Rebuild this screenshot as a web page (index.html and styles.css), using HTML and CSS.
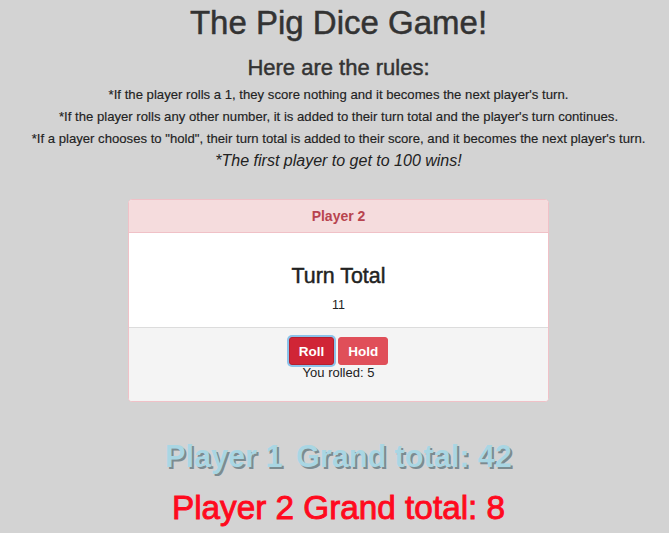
FILE: index.html
```html
<!DOCTYPE html>
<html>
<head>
<meta charset="utf-8">
<title>The Pig Dice Game!</title>
<link rel="stylesheet" href="styles.css">
</head>
<body>
<main class="page">
  <h1 class="title">The Pig Dice Game!</h1>
  <h3 class="rules-title">Here are the rules:</h3>
  <p class="rule">*If the player rolls a 1, they score nothing and it becomes the next player's turn.</p>
  <p class="rule">*If the player rolls any other number, it is added to their turn total and the player's turn continues.</p>
  <p class="rule">*If a player chooses to "hold", their turn total is added to their score, and it becomes the next player's turn.</p>
  <p class="rule-win">*The first player to get to 100 wins!</p>

  <section class="card">
    <header class="card-header">Player 2</header>
    <div class="card-body">
      <h4 class="turn-title">Turn Total</h4>
      <p class="turn-value">11</p>
    </div>
    <footer class="card-footer">
      <div class="buttons">
        <button class="btn btn-roll">Roll</button>
        <button class="btn btn-hold">Hold</button>
      </div>
      <p class="rolled">You rolled: 5</p>
    </footer>
  </section>

  <h2 class="total total-p1"><span>Player 1</span> <span class="gap">Grand total: 42</span></h2>
  <h2 class="total total-p2">Player 2 Grand total: 8</h2>
</main>
</body>
</html>
```
FILE: styles.css
```css
html, body {
  margin: 0;
  padding: 0;
}
body {
  background: #d3d3d3;
  font-family: "Liberation Sans", Arial, Helvetica, sans-serif;
  color: #333;
  padding-left: 8px;
}
.page {
  text-align: center;
}
.title {
  margin: 0;
  padding-top: 3px;
  font-size: 33px;
  line-height: 40px;
  font-weight: normal;
  color: #333;
  -webkit-text-stroke: 0.5px #333;
}
.rules-title {
  margin: 12px 0 3px;
  font-size: 22px;
  line-height: 26px;
  font-weight: normal;
  color: #333;
  -webkit-text-stroke: 0.45px #333;
}
.rule {
  margin: 0;
  font-size: 13.15px;
  line-height: 22px;
  color: #222;
  -webkit-text-stroke: 0.15px #222;
}
.rule-win {
  margin: 0;
  font-size: 16px;
  line-height: 22px;
  font-style: italic;
  color: #222;
}
.card {
  width: 419px;
  margin: 27px 0 0 120px;
  border: 1px solid #f0c1c7;
  border-radius: 4px;
  background: #fff;
  overflow: hidden;
  text-align: center;
}
.card-header {
  height: 32px;
  line-height: 32px;
  background: #f5dcdd;
  border-bottom: 1px solid #f0c1c7;
  color: #b8444f;
  font-weight: bold;
  font-size: 14px;
}
.card-body {
  padding: 31px 0 13px;
  background: #fff;
  border-bottom: 1px solid #dcdcdc;
}
.turn-title {
  margin: 0 0 8px;
  font-size: 21.4px;
  line-height: 24px;
  font-weight: normal;
  color: #222;
  -webkit-text-stroke: 0.45px #222;
}
.turn-value {
  margin: 0;
  font-size: 12.5px;
  line-height: 18px;
  color: #222;
}
.card-footer {
  background: #f4f4f4;
  padding: 9px 0 20px;
}
.buttons {
  display: flex;
  justify-content: center;
  gap: 4px;
}
.btn {
  height: 28px;
  padding: 0 9px;
  border-radius: 3px;
  font-family: "Liberation Sans", Arial, sans-serif;
  font-size: 13.5px;
  font-weight: bold;
  color: #fff;
  cursor: pointer;
}
.btn-roll {
  background: #d02536;
  border: 1px solid #b51f2e;
  box-shadow: 0 0 0 2px #8cc3ea;
}
.btn-hold {
  background: #e04f59;
  border: 1px solid #e04f59;
}
.rolled {
  margin: 0;
  font-size: 13px;
  line-height: 16px;
  color: #222;
}
.total {
  margin: 0;
}
.total-p1 {
  margin-top: 36px;
  font-size: 30.6px;
  line-height: 36px;
  font-weight: bold;
  color: #a9d6e3;
  text-shadow: 2px 2px 0 #7c8b90;
}
.total-p1 .gap {
  margin-left: 5px;
}
.total-p2 {
  margin-top: 15px;
  font-size: 33.3px;
  line-height: 38px;
  font-weight: normal;
  color: #ff0a1e;
  -webkit-text-stroke: 0.9px #ff0a1e;
}
```
